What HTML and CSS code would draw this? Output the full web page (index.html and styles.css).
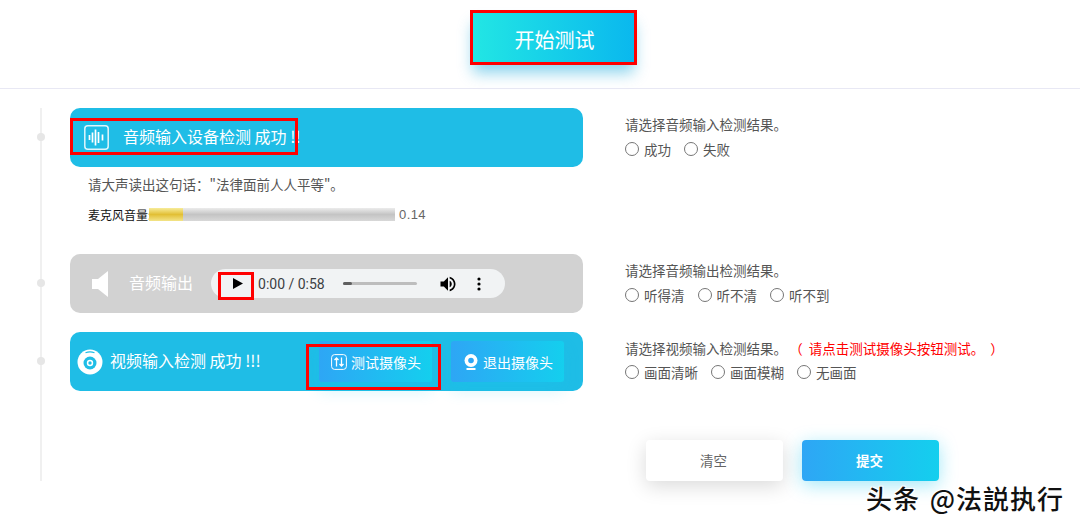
FILE: index.html
```html
<!DOCTYPE html>
<html lang="zh-CN">
<head>
  <meta charset="UTF-8" />
  <meta name="viewport" content="width=device-width, initial-scale=1.0"/>
  <title>设备检测</title>
  <link rel="stylesheet" href="styles.css">
</head>
<body>
  <header class="top-bar">
    <button class="start-btn" type="button">
      开始测试
      <span class="mark mark-start"></span>
    </button>
  </header>

  <main class="tests">
    <section class="test-row test-row-mic">
      <div class="test-main">
        <div class="card card-blue">
          <svg class="icon-wave" viewBox="0 0 25 25" fill="none" stroke="#fff">
            <rect x="0.8" y="0.8" width="23.4" height="23.4" rx="3" stroke-width="1.5" opacity="0.85"/>
            <path d="M5.5 10v5M8.500 7.500v10M11.500 4.500v16M14.500 7v11M18.500 9.500v6" stroke-width="1.700"/>
          </svg>
          <span class="card-title">音频输入设备检测 成功 !!</span>
          <span class="mark mark-title"></span>
        </div>
        <p class="read-hint">请大声读出这句话："法律面前人人平等"。</p>
        <div class="meter-row">
          <span class="meter-label">麦克风音量:</span>
          <div class="meter"><div class="meter-fill" style="width: 14%"></div></div>
          <span class="meter-value">0.14</span>
        </div>
      </div>
      <div class="answer">
        <p class="question">请选择音频输入检测结果。</p>
        <div class="options">
          <label><input type="radio" name="mic"> 成功</label>
          <label><input type="radio" name="mic"> 失败</label>
        </div>
      </div>
    </section>

    <section class="test-row test-row-speaker">
      <div class="test-main">
        <div class="card card-gray">
          <svg class="icon-speaker" viewBox="0 0 16 26" fill="#fff">
            <path d="M0 8h6L16 0v26L6 18H0z"/>
          </svg>
          <span class="card-title">音频输出</span>
          <div class="player">
            <svg class="icon-play" viewBox="0 0 10 11"><path d="M0 0l10 5.500L0 11z"/></svg>
            <span class="mark mark-play"></span>
            <span class="player-time">0:00 / 0:58</span>
            <div class="player-track"><div class="player-progress"></div></div>
            <svg class="icon-volume" viewBox="0 0 24 24"><path d="M3 9v6h4l5 5V4L7 9H3zm13.500 3c0-1.800-1-3.300-2.500-4v8c1.500-.7 2.500-2.200 2.500-4zM14 3.200v2.100c2.900.9 5 3.500 5 6.700s-2.100 5.800-5 6.700v2.100c4-.9 7-4.500 7-8.800s-3-7.900-7-8.800z"/></svg>
            <svg class="icon-more" viewBox="0 0 4 14"><circle cx="2" cy="2" r="1.600"/><circle cx="2" cy="7" r="1.600"/><circle cx="2" cy="12" r="1.600"/></svg>
          </div>
        </div>
      </div>
      <div class="answer">
        <p class="question">请选择音频输出检测结果。</p>
        <div class="options">
          <label><input type="radio" name="speaker"> 听得清</label>
          <label><input type="radio" name="speaker"> 听不清</label>
          <label><input type="radio" name="speaker"> 听不到</label>
        </div>
      </div>
    </section>

    <section class="test-row test-row-camera">
      <div class="test-main">
        <div class="card card-blue">
          <svg class="icon-eye" viewBox="0 0 26 26">
            <circle cx="13" cy="13" r="12.500" fill="#fff"/>
            <path d="M8.500 3.800q4.500-1.800 9 0" fill="none" stroke="#1fbde6" stroke-width="1.200"/>
            <circle cx="13" cy="14" r="6.500" fill="#1fbde6"/>
            <circle cx="13" cy="14" r="3.200" fill="#fff"/>
            <circle cx="13" cy="14" r="1.700" fill="#1fbde6"/>
          </svg>
          <span class="card-title">视频输入检测 成功 !!!</span>
          <div class="camera-actions">
            <button class="cam-btn" type="button">
              <svg class="icon-cam" viewBox="0 0 16 16" fill="none" stroke="#fff">
                <rect x="0.600" y="0.600" width="14.800" height="14.800" rx="3" stroke-width="1"/>
                <path d="M5.500 12.500V4M3.500 6l2-2 2 2M10.500 3.500V12M8.500 10l2 2 2-2" stroke-width="1.300"/>
              </svg>
              测试摄像头
              <span class="mark mark-cam"></span>
            </button>
            <button class="cam-btn" type="button">
              <svg class="icon-cam" viewBox="0 0 16 16">
                <circle cx="8" cy="6.500" r="6.500" fill="#fff"/>
                <circle cx="8" cy="6.500" r="2.800" fill="#2ea6f5"/>
                <path d="M3.500 14h9v2h-9z" fill="#fff"/>
              </svg>
              退出摄像头
            </button>
          </div>
        </div>
      </div>
      <div class="answer">
        <p class="question">请选择视频输入检测结果。<span class="question-note">（ 请点击测试摄像头按钮测试。 ）</span></p>
        <div class="options">
          <label><input type="radio" name="camera"> 画面清晰</label>
          <label><input type="radio" name="camera"> 画面模糊</label>
          <label><input type="radio" name="camera"> 无画面</label>
        </div>
      </div>
    </section>

    <div class="form-actions">
      <button class="btn btn-clear" type="button">清空</button>
      <button class="btn btn-submit" type="button">提交</button>
    </div>
  </main>

  <div class="watermark">头条 @法説执行</div>
</body>
</html>
```

FILE: styles.css
```css
* {
  box-sizing: border-box;
}

body {
  margin: 0;
  min-height: 100vh;
  background: #fff;
  font-family: "Noto Sans CJK SC", "Liberation Sans", sans-serif;
  font-size: 13.5px;
  color: #555;
}

p {
  margin: 0;
}

button {
  font-family: inherit;
  border: none;
  cursor: pointer;
}

.top-bar {
  height: 89px;
  padding: 13px 0 0 473px;
  border-bottom: 1px solid #e8e8f4;
}

.start-btn {
  position: relative;
  width: 161px;
  height: 49px;
  padding: 3px 0 0 2px;
  font-size: 20px;
  color: #fff;
  background: linear-gradient(to right, #22e6e4, #0ab8ee);
  box-shadow: 0 11px 14px rgba(0, 160, 215, 0.45);
}

.tests {
  position: relative;
  margin: 19px 0 0 40px;
  padding-left: 28px;
  border-left: 2px solid #f0f0f0;
}

.test-row {
  position: relative;
  display: flex;
}

.test-row::before {
  content: "";
  position: absolute;
  left: -33px;
  top: 25px;
  width: 8px;
  height: 8px;
  border-radius: 50%;
  background: #e6e6e6;
}

.test-row-mic {
  height: 146px;
}

.test-row-speaker {
  height: 78px;
}

.test-row-camera {
  height: 59px;
}

.test-main {
  width: 513px;
  flex-shrink: 0;
}

.card {
  position: relative;
  display: flex;
  align-items: center;
  height: 59px;
  border-radius: 10px;
  color: #fff;
}

.card-blue {
  background: #1fbde6;
}

.card-gray {
  background: #d2d2d2;
  padding-left: 22px;
}

.card-title {
  margin-bottom: 4px;
  font-size: 16px;
  line-height: 22px;
  white-space: nowrap;
}

.test-row-mic .card {
  padding-left: 14px;
}

.icon-wave {
  width: 25px;
  height: 25px;
  margin-right: 14px;
}

.icon-speaker {
  width: 16px;
  height: 26px;
  margin-right: 21px;
}

.icon-eye {
  width: 26px;
  height: 26px;
  margin: 0 7px 0 7px;
}

/* red annotation boxes drawn over the screenshot */
.mark {
  position: absolute;
  border: 3px solid #f00;
}

.mark-start {
  left: -3px;
  top: -3px;
  width: 167px;
  height: 55px;
}

.mark-title {
  left: 0;
  top: 10px;
  width: 228px;
  height: 37px;
}

.mark-play {
  left: 7px;
  top: 3px;
  width: 36px;
  height: 28px;
}

.mark-cam {
  left: -13px;
  top: 3px;
  width: 135px;
  height: 46px;
}

.read-hint {
  margin: 8px 0 0 18px;
  line-height: 18px;
}

.meter-row {
  display: flex;
  align-items: center;
  margin: 14px 0 0 18px;
  height: 14px;
}

.meter-label {
  width: 61px;
  font-size: 12px;
  color: #111;
  white-space: nowrap;
}

.meter {
  width: 246px;
  height: 13px;
  background: linear-gradient(to bottom, #ececec, #c4c4c4 50%, #d8d8d8);
}

.meter-fill {
  height: 100%;
  background: linear-gradient(to bottom, #f7ec9a, #e2bf35 50%, #f3e488);
}

.meter-value {
  margin-left: 4px;
  font-family: "Liberation Sans", sans-serif;
  font-size: 13px;
  letter-spacing: 0.4px;
  color: #666;
}

.player {
  position: relative;
  display: flex;
  align-items: center;
  width: 294px;
  height: 29px;
  margin-left: 18px;
  padding-left: 22px;
  border-radius: 15px;
  background: #f1f3f4;
  color: #3c4043;
}

.icon-play {
  width: 10px;
  height: 11px;
}

.player-time {
  margin-left: 15px;
  width: 85px;
  font-family: Roboto, "Liberation Sans", sans-serif;
  font-size: 14px;
  white-space: nowrap;
}

.player-track {
  width: 74px;
  height: 3px;
  border-radius: 2px;
  background: #bdbdbd;
}

.player-progress {
  width: 9px;
  height: 100%;
  border-radius: 2px;
  background: #5f5f5f;
}

.icon-volume {
  width: 20px;
  height: 20px;
  margin-left: 21px;
}

.icon-more {
  width: 4px;
  height: 14px;
  margin-left: 19px;
}

.camera-actions {
  display: flex;
  gap: 19px;
  margin-left: auto;
  margin-right: 19px;
  align-self: flex-start;
  margin-top: 9px;
}

.cam-btn {
  position: relative;
  display: flex;
  align-items: center;
  gap: 4px;
  width: 113px;
  height: 41px;
  padding: 0 0 0 12px;
  font-size: 14px;
  white-space: nowrap;
  color: #fff;
  border-radius: 3px;
  background: linear-gradient(to right, #2ea6f5, #14cfee);
  box-shadow: 0 8px 16px rgba(20, 200, 240, 0.2);
}

.icon-cam {
  width: 16px;
  height: 16px;
}

.answer {
  margin-left: 42px;
  padding-top: 7px;
}

.question {
  line-height: 18px;
  white-space: nowrap;
}

.question-note {
  color: #f00;
  margin-left: 9px;
  word-spacing: 3px;
}

.options {
  display: flex;
  gap: 13px;
  margin-top: 7px;
  line-height: 18px;
}

.test-row-camera .options {
  margin-top: 6px;
}

.options label {
  display: flex;
  align-items: center;
  gap: 5px;
  white-space: nowrap;
}

.options input {
  width: 14px;
  height: 14px;
  margin: 0;
  flex-shrink: 0;
}

.form-actions {
  display: flex;
  gap: 19px;
  padding: 49px 0 0 576px;
}

.btn {
  width: 137px;
  height: 41px;
  padding: 0 2px 2px 0;
  font-size: 13.5px;
  border-radius: 4px;
}

.btn-clear {
  background: #fff;
  color: #666;
  box-shadow: 0 5px 20px rgba(0, 0, 0, 0.15);
}

.btn-submit {
  background: linear-gradient(to right, #2ea6f5, #14cfee);
  color: #fff;
  font-weight: 700;
  box-shadow: 0 4px 18px rgba(20, 200, 240, 0.4);
}

.watermark {
  position: absolute;
  left: 866px;
  top: 481px;
  font-size: 26px;
  font-weight: 500;
  line-height: 34px;
  letter-spacing: 1px;
  word-spacing: 3px;
  color: #111;
  white-space: nowrap;
  text-shadow: 1px 1px 0 #fff, -1px -1px 0 #fff, 1px -1px 0 #fff, -1px 1px 0 #fff;
}
```
